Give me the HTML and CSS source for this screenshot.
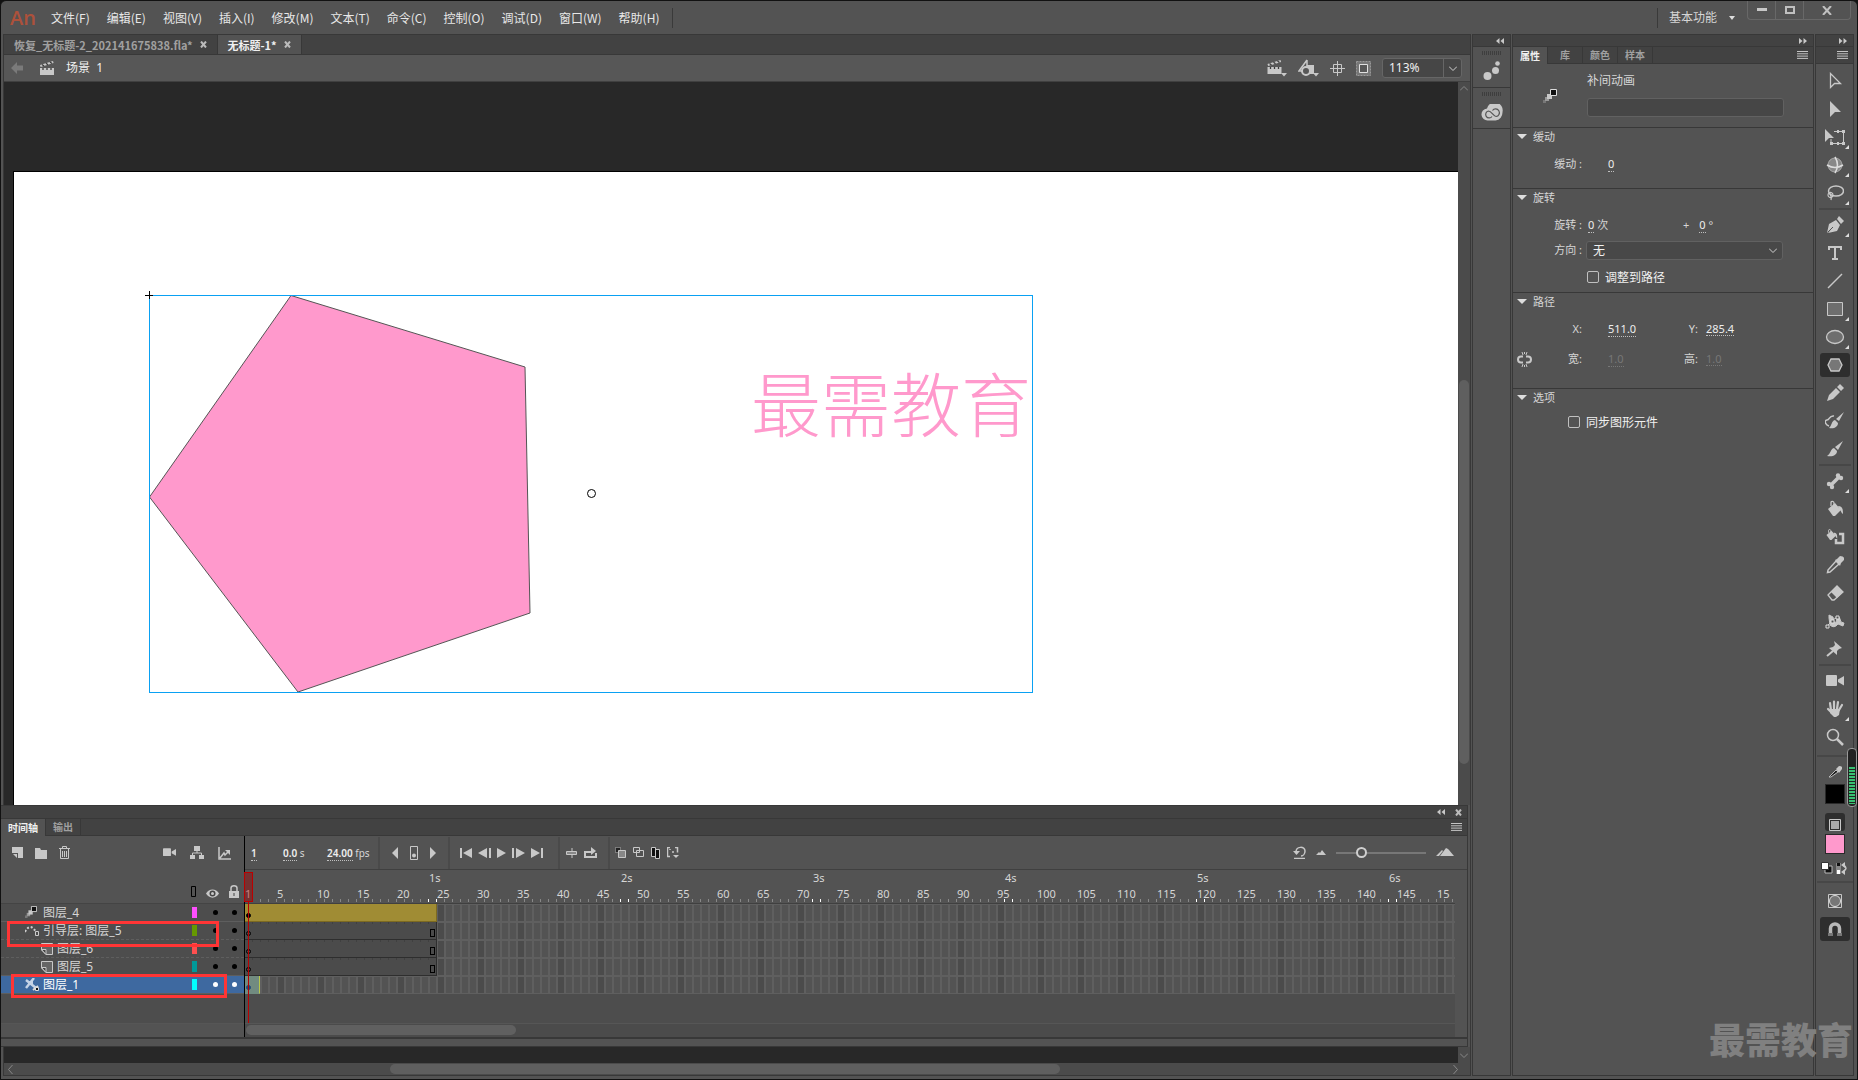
FILE: index.html
```html
<!DOCTYPE html>
<html lang="zh-CN">
<head>
	<meta charset="UTF-8">
	<meta name="viewport" content="width=device-width, initial-scale=1.0">
	<title>无标题-1*</title>
	<link rel="stylesheet" href="styles.css">
</head>
<body>
	<svg class="defs" aria-hidden="true">
		<symbol id="clapper" viewBox="0 0 16 16"><path d="M1 8h14v7H1z M1 5l13-4 .6 2L1.6 7z"/><path d="M3 4.5l2 1.6M7 3.2l2 1.6M11 2l2 1.5M4 8v2M8 8v2M12 8v2" stroke="#3c3c3c" stroke-width="1.3"/></symbol>
		<symbol id="menu" viewBox="0 0 11 8"><path d="M0 .5h11M0 2.8h11M0 5.1h11M0 7.4h11" stroke="#c4c4c4" fill="none"/></symbol>
		<symbol id="left2" viewBox="0 0 8 6"><path d="M3.5 0v6L0 3zM8 0v6L4.500 3z"/></symbol>
		<symbol id="right2" viewBox="0 0 8 6"><path d="M0 0v6l3.500-3zM4.500 0v6L8 3z"/></symbol>
		<symbol id="close" viewBox="0 0 7 7"><path d="M1 .5l5 6M6 .5l-5 6" stroke="#bbb" stroke-width="2"/></symbol>
		<symbol id="cam" viewBox="0 0 18 12"><rect width="11" height="11" rx="1"/><path d="M12 4.500L18 1v9.500L12 7z"/></symbol>
		<symbol id="tween" viewBox="0 0 14 14"><path d="M0 11h3v3H0z" fill="#777"/><path d="M2 8h4v4H2z" fill="#999"/><path d="M4 5h5v5H4z"/><path d="M7.500 .5h6v6h-6z" fill="#111" stroke="#ddd"/></symbol>
		<symbol id="page" viewBox="0 0 12 12"><path d="M.5 .5h11v11H5L.5 7z" fill="#666" stroke="#c8c8c8"/><path d="M.5 6.500H5v5z" fill="#444" stroke="#c8c8c8"/></symbol>
		<symbol id="bucket" viewBox="0 0 18 18"><path d="M2 9l7-6 6 7-6 6H7z"/><path d="M5 6V2.500C5 1 8 1 8 3v4" fill="none" stroke="#c8c8c8" stroke-width="1.300"/><path d="M12 6c4 0 5 2 5 8-2-1-2-4-4-5z"/></symbol>
	</svg>

	<div class="app">
		<header class="titlebar">
			<span class="logo">An</span>
			<nav class="menubar">
				<button>文件(F)</button><button>编辑(E)</button><button>视图(V)</button><button>插入(I)</button><button>修改(M)</button><button>文本(T)</button><button>命令(C)</button><button>控制(O)</button><button>调试(D)</button><button>窗口(W)</button><button>帮助(H)</button>
			</nav>
			<button class="workspace-btn">基本功能 <i class="caret"></i></button>
			<div class="win-btns">
				<button aria-label="最小化"><svg width="10" height="4"><path d="M0 0h10v3H0z"/></svg></button>
				<button aria-label="最大化"><svg width="10" height="8"><path d="M1 1h8v6H1z" fill="none" stroke="#c0c0c0" stroke-width="2"/></svg></button>
				<button aria-label="关闭"><svg width="10" height="9"><path d="M1 0l8 9M9 0L1 9" stroke="#c0c0c0" stroke-width="2"/></svg></button>
			</div>
		</header>

		<div class="main">
			<main class="workspace">
				<div class="doc-tabs">
					<div class="doc-tab"><span>恢复_无标题-2_202141675838.fla*</span><button aria-label="关闭"><svg width="7" height="7"><use href="#close"/></svg></button></div>
					<div class="doc-tab active"><span>无标题-1*</span><button aria-label="关闭"><svg width="7" height="7"><use href="#close"/></svg></button></div>
				</div>
				<div class="edit-bar">
					<button aria-label="返回"><svg width="12" height="12"><path d="M0 6l6-6v3.500h6v5H6V12z" fill="#7a7a7a"/></svg></button>
					<svg class="scene-icon" width="16" height="16"><use href="#clapper"/></svg>
					<span class="scene">场景 &nbsp;1</span>
					<div class="edit-tools">
						<button aria-label="编辑场景"><svg width="21" height="18"><use href="#clapper" width="17" height="16"/><path d="M15 14h6l-3 3.500z"/></svg></button>
						<button aria-label="编辑元件"><svg width="21" height="18"><path d="M9 1L1 12h5M9 1v5" fill="none" stroke="#c8c8c8" stroke-width="1.500"/><path d="M8 6h8v9h-5z"/><circle cx="8" cy="12" r="4" fill="#575757" stroke="#c8c8c8" stroke-width="2"/><path d="M15 14h6l-3 3.500z"/></svg></button>
						<button aria-label="舞台居中"><svg width="15" height="15"><path d="M7.500 0v15M0 7.500h15M3.500 3.500h8v8h-8z" fill="none" stroke="#c8c8c8"/></svg></button>
						<button aria-label="剪切舞台外内容"><svg width="15" height="15"><path d="M.5 .5h14v14H.5z" fill="#777" stroke="#999" stroke-dasharray="2 1"/><path d="M3.500 3.500h8v8h-8z" fill="#575757" stroke="#e0e0e0"/></svg></button>
						<div class="zoom"><input type="text" value="113%" aria-label="缩放"><button aria-label="缩放选项"><svg width="8" height="5"><path d="M0 .5l4 4 4-4" fill="none" stroke="#d0d0d0"/></svg></button></div>
					</div>
				</div>

				<div class="canvas-area">
					<div class="pasteboard">
						<div class="stage">
							<svg class="artwork">
								<path d="M277 123.500L511 195l5 246-232 79L135.500 325z" fill="#ff99cc" stroke="#555"/>
								<rect x="135.500" y="123.500" width="883" height="397" fill="none" stroke="#0aa1f3"/>
								<path d="M131 123.500h8M135.500 119v8" stroke="#000"/>
								<circle cx="577.500" cy="321.500" r="4" fill="#fff" stroke="#000"/>
								<text class="stage-text" x="737" y="260">最需教育</text>
							</svg>
						</div>
					</div>
					<div class="vscroll"><svg width="8" height="5"><path d="M0 4.500l4-4 4 4" fill="none" stroke="#888"/></svg><i class="vthumb"></i></div>
				</div>

				<section class="timeline">
					<div class="tl-head"><button aria-label="折叠"><svg width="8" height="6"><use href="#left2"/></svg></button><button aria-label="关闭"><svg width="7" height="7"><use href="#close"/></svg></button></div>
					<div class="tabs tl-tabs"><button class="active">时间轴</button><button>输出</button><svg class="menu-icon" width="11" height="8"><use href="#menu"/></svg></div>
					<div class="tl-body">
						<div class="layers">
							<div class="layer-tools">
								<button aria-label="新建图层"><svg width="12" height="12"><path d="M0 0h11v11H6V6H0z"/><path d="M1 7h4v4z"/></svg></button>
								<button aria-label="新建文件夹"><svg width="13" height="12"><path d="M0 1h5l1 2h6v9H0z"/></svg></button>
								<button aria-label="删除"><svg width="12" height="14"><path d="M0 2.500h11M3.500 2V.5h4V2M1.500 3v9.500h8V3M3.500 5v6M5.500 5v6M7.500 5v6" fill="none" stroke="#c8c8c8"/></svg></button>
								<div class="view-tools">
									<button aria-label="摄像头"><svg width="13" height="10"><use href="#cam" width="13" height="9"/></svg></button>
									<button aria-label="父级视图"><svg width="14" height="14"><path d="M4 0h6v5H4zM0 9h5v4H0zM9 9h5v4H9z"/><path d="M7 5v2M2.500 9V7h9v2" fill="none" stroke="#c8c8c8"/></svg></button>
									<button aria-label="图层深度"><svg width="13" height="13"><path d="M1 0v12h12M2 11l4-5 1 2 4-4" fill="none" stroke="#c8c8c8" stroke-width="1.500"/><path d="M7 3h5v5z"/></svg></button>
								</div>
							</div>
							<div class="layer-head">
								<svg width="5" height="12"><path d="M.5 .5h4v10h-4z" fill="none" stroke="#000"/></svg>
								<svg width="13" height="9"><path d="M0 4.500C3-1 10-1 13 4.500 10 10 3 10 0 4.500z"/><circle cx="6.500" cy="4.500" r="3" fill="#444"/><circle cx="6.500" cy="4.500" r="1.500"/></svg>
								<svg width="10" height="13"><path d="M0 6h10v7H0z"/><path d="M2 6V3c0-3 6-3 6 0v3" fill="none" stroke="#c8c8c8" stroke-width="1.500"/><path d="M4.500 8h1v3h-1z" fill="#444"/></svg>
							</div>
							<div class="layer"><svg width="14" height="14"><use href="#tween" width="12" height="12"/></svg><span>图层_4</span><i class="swatch magenta"></i><i class="dot"></i><i class="dot"></i></div>
							<div class="layer dashed"><svg width="14" height="14"><path d="M0 8q5-10 11 0" fill="none" stroke="#ccc" stroke-width="2" stroke-dasharray="2 2"/><path d="M10.500 7.500h3v4h-3z" fill="none" stroke="#ccc"/></svg><span>引导层: 图层_5</span><i class="swatch olive"></i><i class="dot"></i><i class="dot"></i></div>
							<div class="layer child dashed"><svg width="12" height="12"><use href="#page"/></svg><span>图层_6</span><i class="swatch red"></i><i class="dot"></i><i class="dot"></i></div>
							<div class="layer child"><svg width="12" height="12"><use href="#page"/></svg><span>图层_5</span><i class="swatch teal"></i><i class="dot"></i><i class="dot"></i></div>
							<div class="layer selected"><svg width="14" height="14"><path d="M1 2l10 8M9 0L1 10" stroke="#c5d3e6" stroke-width="2.500"/><path d="M3 3h5v4H3z" fill="#c5d3e6"/><path d="M8 12l5-4" stroke="#ddd" stroke-width="2"/><path d="M10.500 9.500h3v3h-3z" fill="#111" stroke="#ddd"/></svg><span>图层_1</span><i class="swatch cyan"></i><i class="dot"></i><i class="dot"></i></div>
							<div class="layer-rest"></div>
							<div class="annot annot-guide"></div>
							<div class="annot annot-mask"></div>
						</div>

						<div class="frames">
							<div class="play-tools">
								<div class="readout"><span><u>1</u></span><span><u>0.0</u> s</span><span><u>24.00</u> fps</span></div>
								<div class="group keys">
									<button aria-label="上一关键帧"><svg width="6" height="12"><path d="M6 0v12L0 6z"/></svg></button>
									<button aria-label="插入关键帧"><svg width="8" height="14"><path d="M.5 .5h7v13h-7z" fill="none" stroke="#c8c8c8"/><circle cx="4" cy="9.500" r="2"/></svg></button>
									<button aria-label="下一关键帧"><svg width="6" height="12"><path d="M0 0v12l6-6z"/></svg></button>
								</div>
								<div class="group play">
									<button aria-label="第一帧"><svg width="12" height="10"><path d="M0 0h2v10H0zM12 0v10L3 5z"/></svg></button>
									<button aria-label="后退一帧"><svg width="13" height="10"><path d="M9 0v10L0 5zM11 0h2v10h-2z"/></svg></button>
									<button aria-label="播放"><svg width="9" height="10"><path d="M0 0v10l9-5z"/></svg></button>
									<button aria-label="前进一帧"><svg width="13" height="10"><path d="M4 0v10l9-5zM0 0h2v10H0z"/></svg></button>
									<button aria-label="最后一帧"><svg width="12" height="10"><path d="M0 0v10l9-5zM10 0h2v10h-2z"/></svg></button>
								</div>
								<div class="group two">
									<button aria-label="帧居中"><svg width="12" height="10"><path d="M6 0v10M0 5h11" stroke="#c8c8c8"/><path d="M.5 3.500h10v3H.5z" fill="#888" stroke="#c8c8c8"/></svg></button>
									<button aria-label="循环"><svg width="13" height="12"><path d="M3 5H1v5h11V6M3 5h4" fill="none" stroke="#c8c8c8" stroke-width="2"/><path d="M7 0l5 4-5 4z"/></svg></button>
								</div>
								<div class="group onion">
									<button aria-label="绘图纸外观"><svg width="11" height="11"><path d="M.5 .5h5v5h-5z" fill="#222" stroke="#bbb" stroke-dasharray="1 1"/><path d="M3.500 3.500h7v7h-7z" fill="#888" stroke="#c8c8c8"/></svg></button>
									<button aria-label="绘图纸外观轮廓"><svg width="11" height="11"><path d="M.5 .5h6v5h-6zM3.500 3.500h7v6h-7z" fill="#535353" stroke="#c8c8c8"/></svg></button>
									<button aria-label="编辑多个帧"><svg width="9" height="12"><path d="M.5 .5h4v9h-4zM4.500 2.500h4v9h-4z" fill="#111" stroke="#c8c8c8"/></svg></button>
									<button aria-label="修改标记"><svg width="12" height="12"><path d="M3 .5H.5v9H3M8 .5h2.500v5M3 2v1M5 5h2" fill="none" stroke="#c8c8c8" stroke-width="1.500"/><path d="M6 8h6l-3 3z"/></svg></button>
								</div>
								<div class="tl-zoom">
									<button aria-label="重置缩放"><svg width="13" height="13"><path d="M3 6c0-6 9-6 9-1 0 3-2 5-4 5M1 12.500h11" fill="none" stroke="#c8c8c8" stroke-width="1.500"/><path d="M0 5h7L3.500 9z"/></svg></button>
									<svg width="10" height="6"><path d="M0 5l3-3 1 1 2-3 4 5z"/></svg>
									<input type="range" min="0" max="100" value="25" aria-label="时间轴缩放">
									<svg width="18" height="9"><path d="M0 8l6-6 1 1-4 5zM4 8l6-8 2 1 1 1 5 6z"/></svg>
								</div>
							</div>
							<div class="ruler">
								<div class="seconds"><span>1s</span><span>2s</span><span>3s</span><span>4s</span><span>5s</span><span>6s</span></div>
								<div class="numbers"><span>1</span><span>5</span><span>10</span><span>15</span><span>20</span><span>25</span><span>30</span><span>35</span><span>40</span><span>45</span><span>50</span><span>55</span><span>60</span><span>65</span><span>70</span><span>75</span><span>80</span><span>85</span><span>90</span><span>95</span><span>100</span><span>105</span><span>110</span><span>115</span><span>120</span><span>125</span><span>130</span><span>135</span><span>140</span><span>145</span><span>15</span></div>
							</div>
							<div class="frame-row"><div class="span tweened"><i class="key full"></i></div></div>
							<div class="frame-row"><div class="span"><i class="key"></i><i class="end"></i></div></div>
							<div class="frame-row"><div class="span"><i class="key"></i><i class="end"></i></div></div>
							<div class="frame-row"><div class="span"><i class="key"></i><i class="end"></i></div></div>
							<div class="frame-row"><div class="span short"><i class="key blue"></i></div></div>
							<div class="frame-rest"></div>
							<div class="frame-scroll"><i></i></div>
							<div class="playhead"></div>
						</div>
					</div>
					<div class="tl-foot"></div>
				</section>

				<div class="canvas-foot"><svg width="8" height="5"><path d="M0 .5l4 4 4-4" fill="none" stroke="#888"/></svg></div>
				<div class="hscroll">
					<svg width="5" height="9"><path d="M4.500 0l-4 4.500 4 4.500" fill="none" stroke="#888"/></svg>
					<div class="htrack"><i></i></div>
					<svg width="5" height="9"><path d="M.5 0l4 4.500-4 4.500" fill="none" stroke="#888"/></svg>
				</div>
			</main>

			<aside class="dock">
				<div class="col-head"><svg width="8" height="6"><use href="#left2"/></svg></div>
				<div class="dock-item"><i class="grip"></i><button aria-label="画笔库"><svg width="18" height="20"><circle cx="4.500" cy="15" r="4"/><circle cx="12.500" cy="9.500" r="3.500"/><circle cx="14.500" cy="2.500" r="2.300"/></svg></button></div>
				<div class="dock-item"><i class="grip"></i><button aria-label="CC 库"><svg width="22" height="17"><path d="M7 16.500a6 6 0 0 1-1-12A7.500 7.500 0 0 1 21.500 8a8 8 0 0 1-7 8.500z"/><path d="M11 12.500a3.500 3.500 0 1 1-3.500-5.500c3 0 5 5.500 7.500 5.500a3.800 3.800 0 1 0-3.500-6" fill="none" stroke="#555" stroke-width="1.200"/></svg></button></div>
			</aside>

			<aside class="props">
				<div class="col-head"><svg width="8" height="6"><use href="#right2"/></svg></div>
				<div class="tabs"><button class="active">属性</button><button>库</button><button>颜色</button><button>样本</button><svg class="menu-icon" width="11" height="8"><use href="#menu"/></svg></div>
				<div class="prop-top">
					<svg width="14" height="14"><use href="#tween"/></svg>
					<div><label for="inst">补间动画</label><input id="inst" type="text"></div>
				</div>
				<section class="prop ease">
					<h2>缓动</h2>
					<div class="row"><span class="lab">缓动 :</span><span class="in"><u>0</u></span></div>
				</section>
				<section class="prop rotate">
					<h2>旋转</h2>
					<div class="row"><span class="lab">旋转 :</span><span class="val"><u>0</u> 次</span><span class="plus"><span>+</span><span><u>0</u> °</span></span></div>
					<div class="row"><label class="lab" for="dir">方向 :</label><select id="dir"><option>无</option></select></div>
					<label class="check"><input type="checkbox">调整到路径</label>
				</section>
				<section class="prop path">
					<h2>路径</h2>
					<div class="row"><span class="lab">X:</span><span class="in"><u>511.0</u></span><span class="lab2">Y:</span><u>285.4</u></div>
					<div class="row dim"><span class="lab"><svg width="15" height="15"><path d="M6 4.500H4a3 3 0 0 0 0 6h2M9 4.500h2a3 3 0 0 1 0 6H9" fill="none" stroke="#c8c8c8" stroke-width="2"/><path d="M5 0l1 3M10 0L9 3M7.500 0v2M5 15l1-3M10 15l-1-3M7.500 15v-2" stroke="#c8c8c8"/></svg>宽:</span><span class="in"><u>1.0</u></span><span class="lab2">高:</span><u>1.0</u></div>
				</section>
				<section class="prop options">
					<h2>选项</h2>
					<label class="check"><input type="checkbox">同步图形元件</label>
				</section>
			</aside>

			<aside class="tools">
				<div class="col-head"><svg width="8" height="6"><use href="#right2"/></svg></div>
				<div class="tabs"><svg class="menu-icon" width="11" height="8"><use href="#menu"/></svg></div>
				<div class="tool-list">
					<button aria-label="选择工具"><svg width="18" height="18"><path d="M4.500 1.500v14l4-4h6z" fill="none" stroke="#c8c8c8" stroke-width="1.300"/></svg></button>
					<button aria-label="部分选取"><svg width="18" height="18"><path d="M4 1v16l5-5h6z"/></svg></button>
					<button class="more" aria-label="任意变形"><svg width="20" height="18"><path d="M0 1v13l4-4h5z"/><path d="M9 3.500h9.500v12H6V11" fill="none" stroke="#c8c8c8"/><path d="M17 2h3v3h-3zM17 14h3v3h-3zM5 14h3v3H5zM12 2h2v3h-2zM12 14h2v3h-2z"/></svg></button>
					<button class="more" aria-label="3D 旋转"><svg width="18" height="18"><circle cx="9" cy="9" r="7" fill="#888" stroke="#aaa"/><path d="M1 9q8 5 16 0M9 1q5 8 0 16" fill="none" stroke="#ddd" stroke-width="1.500"/></svg></button>
					<button class="more" aria-label="套索"><svg width="18" height="18"><ellipse cx="10" cy="7" rx="7.500" ry="5" fill="none" stroke="#c8c8c8" stroke-width="1.500"/><path d="M3 9a2.500 2.500 0 1 0 4 2 2.500 2.500 0 0 0-4-2q3 3 2 7" fill="none" stroke="#c8c8c8" stroke-width="1.200"/></svg></button>
					<hr>
					<button class="more" aria-label="钢笔"><svg width="18" height="18"><path d="M1 17l2-9 7-4 4 5-3 6-9 2 4-5z"/><path d="M11 3l2-3 5 5-3 3z"/><path d="M2 16l5-5" stroke="#535353"/></svg></button>
					<button aria-label="文本"><svg width="18" height="18"><path d="M2 2h14v4h-2V4h-4v10h2v2H6v-2h2V4H4v2H2z"/></svg></button>
					<button aria-label="线条"><svg width="18" height="18"><path d="M2 16L16 2" stroke="#c8c8c8" stroke-width="1.500"/></svg></button>
					<button class="more" aria-label="矩形"><svg width="18" height="18"><path d="M1.500 2.500h15v13h-15z" fill="#6e6e6e" stroke="#c8c8c8"/></svg></button>
					<button class="more" aria-label="椭圆"><svg width="20" height="18"><ellipse cx="10" cy="9" rx="8.500" ry="6.500" fill="#6e6e6e" stroke="#c8c8c8" stroke-width="1.300"/></svg></button>
					<button class="on" aria-label="多角星形"><svg width="18" height="18"><path d="M5 3h8l3 6-3 6H5L2 9z" fill="#777" stroke="#c8c8c8" stroke-width="1.300"/></svg></button>
					<button aria-label="铅笔"><svg width="18" height="18"><path d="M1 17l2-6 7-7 4 4-7 7zM11 3l3-3 4 4-3 3z"/></svg></button>
					<button aria-label="画笔"><svg width="20" height="18"><path d="M19 0l-5 9-3-2zM10 8l3 3c0 4-4 6-9 5 3-2 2-7 6-8z"/><path d="M9 4C4 3 5 8 2 8s-2 5 2 6" fill="none" stroke="#c8c8c8" stroke-width="1.500"/></svg></button>
					<button aria-label="刷子"><svg width="18" height="18"><path d="M17 1l-5 9-3-3zM8 8l3 3c0 4-4 6-10 5 4-2 3-7 7-8z"/></svg></button>
					<hr>
					<button class="more" aria-label="骨骼"><svg width="18" height="18"><path d="M4 14L14 4" stroke="#c8c8c8" stroke-width="3.500"/><circle cx="3" cy="12" r="2.200"/><circle cx="6" cy="15" r="2.200"/><circle cx="12" cy="3.500" r="2.200"/><circle cx="15" cy="6" r="2.200"/></svg></button>
					<button aria-label="颜料桶"><svg width="18" height="18"><use href="#bucket"/></svg></button>
					<button aria-label="墨水瓶"><svg width="20" height="18"><use href="#bucket" width="13" height="14"/><path d="M14 6h4v9h-7v-4" fill="none" stroke="#c8c8c8" stroke-width="2.500"/></svg></button>
					<button aria-label="滴管"><svg width="18" height="18"><path d="M10 5l3 3-9 8-2.500.5L2 14z" fill="none" stroke="#c8c8c8" stroke-width="1.500"/><path d="M9 4l2-1 3-3q5 0 4 4l-3 3-1 3z"/></svg></button>
					<button aria-label="橡皮擦"><svg width="18" height="18"><path d="M2 11l9-9 6 6-9 8H6z" fill="none" stroke="#c8c8c8" stroke-width="1.300"/><path d="M5 8l6-6 6 6-6 6z"/></svg></button>
					<button aria-label="宽度"><svg width="20" height="18"><path d="M2 14l6-6 4-3M4 3l4 2 1 5q2 2 3-3 1-5 3 0 0 4 4 4l-1 3-5-2q-4 5-8 1L4 6z" stroke="#c8c8c8"/><path d="M1 13h3v3H1zM6 8h3v3H6zM11 4h3v3h-3z" fill="#535353" stroke="#ddd"/></svg></button>
					<button aria-label="资源变形"><svg width="18" height="18"><path d="M8 1l8 7-3 1-2 2v4L3 8l4-1 2-2z"/><path d="M7 11l-6 5" stroke="#c8c8c8" stroke-width="2"/></svg></button>
					<hr>
					<button aria-label="摄像头"><svg width="18" height="12"><use href="#cam"/></svg></button>
					<button class="more" aria-label="手形"><svg width="18" height="18"><path d="M5 10L4 3M8 9V1.500M11 9l1-7M13 10l3-5M6 13l-4-4" stroke="#c8c8c8" stroke-width="2.200" stroke-linecap="round"/><path d="M4 9h10l-1 6-3 2H8l-4-4z"/></svg></button>
					<button aria-label="缩放"><svg width="18" height="18"><circle cx="7" cy="7" r="5.500" fill="none" stroke="#c8c8c8" stroke-width="1.500"/><path d="M11 11l6 6" stroke="#c8c8c8" stroke-width="2.500"/></svg></button>
					<hr class="wide">
					<div class="colors">
						<svg width="14" height="12"><path d="M1 11l7-7 2 2-7 5z" fill="#222" stroke="#bbb"/><path d="M8 3l3-3q4 0 3 3l-3 4z"/></svg>
						<button class="color black" aria-label="笔触颜色"></button>
						<button class="fill-mode" aria-label="填充"><svg width="12" height="12"><path d="M.5 .5h11v11H.5z" fill="none" stroke="#c8c8c8"/><path d="M2 2h8v8H2z" fill="#aaa"/></svg></button>
						<button class="color pink" aria-label="填充颜色"></button>
						<svg width="27" height="13"><path d="M4 4h7v7H4z" fill="#111" stroke="#bbb"/><path d="M.5 .5h7v7h-7z" fill="#fff" stroke="#333"/><path d="M15 1h5v11h-5z" fill="#888"/><path d="M16 1h3v3h-3z" fill="#111"/><path d="M16 8h3v4h-3z" fill="#fff"/><path d="M22 3q6 3 0 7" fill="none" stroke="#c8c8c8" stroke-width="1.500"/><path d="M20 3l4-3v6zM20 10l4-3v6z"/></svg>
					</div>
					<hr class="wide">
					<button aria-label="对象绘制"><svg width="14" height="14"><path d="M.5 .5h13v13H.5z" fill="none" stroke="#c8c8c8"/><circle cx="7" cy="7" r="5.500" fill="#777" stroke="#ddd"/></svg></button>
					<button class="on" aria-label="贴紧至对象"><svg width="14" height="14"><path d="M2.500 14V6.500a4.500 4.500 0 0 1 9 0V14" fill="none" stroke="#b8b8b8" stroke-width="3.500"/><path d="M0 11h5v3H0zM9 11h5v3H9z" fill="#777"/></svg></button>
				</div>
			</aside>
		</div>
		<div class="meter"><i></i></div>
		<div class="watermark">最需教育</div>
	</div>
</body>
</html>
```
FILE: styles.css
```css
*{box-sizing: border-box;}
body{
	margin: 0; background: #111; color: #d6d6d6;
	font: 12px/18px "Noto Sans", "Noto Sans CJK SC", sans-serif;
}
button{
	padding: 0; border: 0; background: none; color: inherit;
	font: inherit; display: flex; align-items: center; justify-content: center;
}
svg{display: block; fill: #c8c8c8; flex: none;}
i{display: block; flex: none;}
u{text-decoration: none; border-bottom: 1px dotted #c0c0c0; color: #eee;}
.defs{position: absolute; width: 0; height: 0;}
.app{
	position: relative; height: 100vh; min-height: 1000px;
	display: flex; flex-direction: column;
	background: #535353; border: 1px solid #111;
	border-radius: 6px 6px 0 0; overflow: hidden;
}

/* 标题栏 */
.titlebar{height: 33px; flex: none; display: flex; align-items: center; padding-left: 9px;}
.logo{width: 41px; color: #ad513b; font: 600 20px/30px "Open Sans", sans-serif;}
.menubar{display: flex; gap: 17px; height: 20px; padding-right: 13px; margin-right: auto; border-right: 1px solid #3a3a3a; color: #e8e8e8; font-family: "Noto Sans CJK SC", sans-serif;}
.workspace-btn{gap: 12px; height: 20px; padding-left: 11px; border-left: 1px solid #3a3a3a; margin-right: 12px;}
.caret{border: 3px solid transparent; border-top: 4px solid #ddd; border-bottom: 0;}
.win-btns{
	display: flex; align-self: flex-start; height: 19px; margin-right: 6px;
	border: 1px solid #686868; border-top: 0; border-radius: 0 0 4px 4px;
}
.win-btns button{width: 28px; border-right: 1px solid #686868;}
.win-btns button:last-child{width: 46px; border: 0;}

.main{flex: 1; min-height: 0; display: flex; gap: 1px; padding: 0 3px 3px 2px;}
.workspace{flex: 1; min-width: 0; display: flex; flex-direction: column; border: 1px solid #383838;}

/* 文档标签 */
.doc-tabs{height: 20px; flex: none; display: flex; background: #424242; border-bottom: 1px solid #383838;}
.doc-tab{display: flex; align-items: center; gap: 7px; padding: 0 10px; border-right: 1px solid #383838; color: #a0a0a0; font: bold 11px/18px "Noto Sans CJK SC", sans-serif;}
.doc-tab.active{background: #535353; color: #f0f0f0;}
.edit-bar{height: 27px; flex: none; display: flex; align-items: center; background: #575757; border-bottom: 1px solid #404040; padding: 0 8px 0 7px;}
.scene-icon{margin: 0 11px 0 16px;}
.scene{color: #f0f0f0;}
.edit-tools{margin-left: auto; display: flex; align-items: center; gap: 11px;}
.zoom{display: flex; width: 80px; height: 20px; background: #464646; border: 1px solid #666; border-radius: 3px;}
.zoom input{width: 61px; padding: 0 6px; border: 0; border-right: 1px solid #666; background: none; color: #f0f0f0; font: inherit;}
.zoom button{flex: 1;}

/* 舞台 */
.canvas-area{flex: 1; min-height: 0; display: flex;}
.pasteboard{flex: 1; position: relative; overflow: hidden; background: #282828;}
.stage{position: absolute; left: 9px; top: 89px; right: 0; bottom: 0; background: #fff; border: 1px solid #000; border-width: 1px 0 0 1px;}
.artwork{width: 100%; height: 100%;}
.stage-text{fill: #ff99cc; font: 300 70px "Noto Sans CJK SC", sans-serif;}
.vscroll{width: 12px; background: #4b4b4b; display: flex; flex-direction: column; align-items: center; padding-top: 4px;}
.vthumb{width: 10px; height: 384px; margin-top: 289px; border-radius: 5px; background: #5f5f5f;}

/* 时间轴 */
.timeline{flex: none; margin: 0 2px 0 -3px; background: #535353; border: 1px solid #383838; border-left: 0;}
.tl-head{height: 13px; display: flex; align-items: center; justify-content: flex-end; gap: 10px; padding-right: 5px; background: #424242; border-bottom: 1px solid #383838;}
.tabs{height: 17px; display: flex; background: #424242; border-bottom: 1px solid #383838;}
.tabs button{min-width: 35px; padding: 0 7px; border-right: 1px solid #383838; height: 16px; color: #a0a0a0; font: bold 10px/16px "Noto Sans CJK SC", sans-serif;}
.tabs .active{height: 17px; background: #535353; color: #f0f0f0;}
.tabs .menu-icon{margin: 4px 5px 0 auto;}
.tl-body{display: flex;}
.layers{position: relative; width: 243px; flex: none;}
.layer-tools{height: 34px; display: flex; align-items: center; gap: 11px; padding: 0 13px 0 11px;}
.view-tools{margin-left: auto; display: flex; align-items: center; gap: 14px;}
.layer-head{height: 34px; display: flex; align-items: flex-end; gap: 10px; padding: 0 5px 5px 190px; border-bottom: 1px solid #444;}
.layer{height: 18px; display: flex; align-items: center; background: #4d4d4d; border-bottom: 1px solid #5e5e5e; padding: 0 7px 0 24px; font-size: 12px;}
.layer span{flex: 1; padding-left: 4px; line-height: 17px;}
.layer.child{padding-left: 40px;}
.layer.dashed{border-bottom-style: dashed;}
.layer.selected{background: #3e69a0; color: #fff;}
.swatch{width: 5px; height: 11px; margin-right: 16px;}
.magenta{background: #ff4fff;}
.olive{background: #669900;}
.red{background: #ff4f4f;}
.teal{background: #009999;}
.cyan{background: #00ffff;}
.dot{width: 5px; height: 5px; border-radius: 50%; background: #000;}
.dot + .dot{margin-left: 14px;}
.selected .dot{background: #fff;}
.layer-rest{height: 30px; background: #4d4d4d; border-bottom: 1px solid #565656;}
.annot{position: absolute; border: 3px solid #ff3535;}
.annot-guide{left: 6px; top: 85px; width: 212px; height: 26px;}
.annot-mask{left: 10px; top: 138px; width: 216px; height: 24px;}

.frames{position: relative; flex: 1; min-width: 0; border-left: 1px solid #000; padding-right: 12px;}
.play-tools{height: 34px; display: flex; align-items: center; border-bottom: 1px solid #404040; margin-right: -12px; padding-right: 13px; font: 10px/14px "Noto Sans", sans-serif;}
.readout{display: grid; grid-template-columns: 32px 44px 50px; padding-left: 6px; width: 133px;}
.readout u{font-weight: 600;}
.group{display: flex; align-items: center; height: 32px; border-left: 2px solid #4a4a4a;}
.keys{width: 70px; padding-left: 12px; gap: 12px;}
.play{width: 110px; padding-left: 10px; gap: 6px;}
.two{width: 50px; padding-left: 6px; gap: 6px;}
.onion{padding-left: 5px; gap: 7px;}
.tl-zoom{display: flex; align-items: center; gap: 10px; margin-left: auto;}
.tl-zoom input{appearance: none; width: 90px; height: 11px; margin: 0; background: linear-gradient(#777, #777) center/100% 2px no-repeat;}
.tl-zoom input::-webkit-slider-thumb{appearance: none; width: 11px; height: 11px; border: 2px solid #d0d0d0; border-radius: 50%; background: #535353;}

/* 每帧 8px,每秒 24 帧 */
.ruler{
	height: 34px; overflow: hidden; border-bottom: 1px solid #404040; color: #d6d6d6;
	font: 11px/16px "Noto Sans", sans-serif;
	background:
		repeating-linear-gradient(to right, #fff 0 1px, transparent 1px 8px, #fff 8px 9px, transparent 9px 192px) 183px 29px/100% 3px no-repeat,
		repeating-linear-gradient(to right, transparent 0 7px, #888 7px 8px) 0 29px/100% 3px no-repeat;
}
.seconds{display: flex; padding-left: 184px; height: 16px;}
.seconds span{width: 192px; flex: none;}
.numbers{display: flex; height: 17px;}
.numbers span{width: 40px; flex: none;}
.numbers span:first-child{width: 32px;}
.numbers span:last-child{width: 16px;}
.frame-row{
	height: 18px; border: 1px solid #5f5f5f; border-width: 1px 0;
	background:
		repeating-linear-gradient(to right, transparent 0 33px, #4b4b4b 33px 39px, transparent 39px 40px),
		repeating-linear-gradient(to right, #5f5f5f 0 1px, #535353 1px 7px, #5f5f5f 7px 8px);
}
.span{
	position: relative; width: 192px; height: 18px; margin-top: -1px;
	border: 1px solid #2e2e2e; border-width: 0 1px 1px 0;
	background: repeating-linear-gradient(to right, transparent 0 7px, #404040 7px 8px) 0 0/100% 2px no-repeat #4b4b4b;
}
.span.tweened{background: #a08c34; border-color: #7d6a20;}
.span.short{width: 15px; background: #718b80; border-color: #b8c84a; border-bottom-color: #718b80;}
.key{position: absolute; left: 1px; bottom: 3px; width: 5px; height: 5px; border: 1px solid #000; border-radius: 50%;}
.key.full{background: #000;}
.key.blue{background: #1e4a78; border-color: #1e4a78;}
.end{position: absolute; right: 1px; bottom: 2px; width: 5px; height: 8px; border: 1px solid #000;}
.frame-rest{height: 30px; background: #4d4d4d; border-bottom: 1px solid #565656;}
.frame-scroll{height: 13px; padding: 1px; background: #4b4b4b;}
.frame-scroll i{width: 270px; height: 10px; border-radius: 5px; background: #606060;}
.playhead{position: absolute; left: -1px; top: 36px; width: 9px; height: 30px; border: 1px solid #b00; background: rgba(170, 0, 0, .4);}
.playhead::after{content: ""; position: absolute; left: 3px; top: 29px; width: 1px; height: 121px; background: #b00;}
.tl-foot{height: 9px; border-top: 2px solid #383838;}

.canvas-foot{height: 16px; flex: none; display: flex; align-items: center; justify-content: flex-end; background: linear-gradient(#4b4b4b, #4b4b4b) right/12px 100% no-repeat #282828; padding-right: 2px;}
.hscroll{height: 12px; flex: none; display: flex; align-items: center; padding: 0 12px 0 4px; background: #4b4b4b;}
.htrack{flex: 1; padding-left: 26%;}
.htrack i{width: 63%; height: 10px; border-radius: 5px; background: #5f5f5f;}

/* 右侧面板 */
.dock, .props, .tools{flex: none; border: 1px solid #383838;}
.dock{width: 39px;}
.props{width: 302px;}
.tools{width: 39px;}
.col-head{height: 12px; display: flex; align-items: center; justify-content: flex-end; padding-right: 6px; background: #424242; border-bottom: 1px solid #383838;}
.dock-item{height: 41px; display: flex; flex-direction: column; align-items: center; padding-top: 4px; border-bottom: 1px solid #383838;}
.dock-item button{flex: 1;}
.grip{width: 20px; height: 4px; background: repeating-linear-gradient(to right, #3e3e3e 0 1px, transparent 1px 2px);}
.prop-top{height: 64px; display: flex; gap: 30px; padding: 8px 0 0 30px; border-bottom: 1px solid #383838;}
.prop-top svg{margin-top: 17px;}
.prop-top label{display: block;}
.prop-top input{display: block; width: 197px; height: 19px; margin-top: 8px; background: #464646; border: 1px solid #616161; border-radius: 3px; color: #eee;}
.prop{border-bottom: 1px solid #383838; font-size: 11px;}
.prop h2{margin: 0; display: flex; align-items: center; gap: 6px; padding-left: 4px; font: 11px/16px "Noto Sans CJK SC", sans-serif;}
.prop h2::before{content: ""; border: 5px solid transparent; border-top-color: #ddd; border-bottom: 0;}
.prop u{line-height: 12px;}
.row{height: 18px; display: flex; align-items: center; margin-top: 11px;}
.lab{width: 69px; flex: none; text-align: right; display: flex; justify-content: flex-end; align-items: center;}
.lab svg{margin: 0 auto 0 4px;}
.in{width: 98px; padding-left: 26px;}
.val{width: 101px; padding-left: 6px;}
.plus{display: flex; gap: 10px;}
.lab2{width: 18px; margin-right: 8px; text-align: right;}
.dim u{color: #777; border-color: #777;}
.row select{
	appearance: none; width: 197px; height: 19px; margin-left: 4px; padding: 0 6px;
	border: 1px solid #616161; border-radius: 3px; color: #f0f0f0;
	font: 12px/16px "Noto Sans CJK SC", sans-serif;
	background: #484848 url("data:image/svg+xml,%3Csvg xmlns='http://www.w3.org/2000/svg' width='8' height='5'%3E%3Cpath d='M0 .5l4 4 4-4' fill='none' stroke='%23d0d0d0'/%3E%3C/svg%3E") right 5px center no-repeat;
}
.check{display: flex; align-items: center; gap: 6px; color: #f0f0f0; font: 12px/18px "Noto Sans CJK SC", sans-serif;}
.check input{appearance: none; width: 12px; height: 12px; margin: 0; border: 1px solid #c0c0c0; border-radius: 2px;}
.ease{padding-bottom: 15px;}
.rotate .row + .row{margin-top: 7px;}
.rotate .check{margin: 9px 0 6px 74px;}
.path .row + .row{margin-top: 12px; margin-bottom: 20px;}
.options{border: 0;}
.options .check{margin: 8px 0 0 55px;}

.tool-list{display: flex; flex-direction: column; align-items: center; gap: 4px; padding-top: 5px;}
.tool-list button{position: relative; width: 30px; height: 24px; border-radius: 3px; flex: none;}
.tool-list .on{background: #2e2e2e;}
.more::after{content: ""; position: absolute; right: 1px; bottom: 0; border: 2px solid transparent; border-right-color: #ddd; border-bottom-color: #ddd;}
.tool-list hr{width: 32px; height: 2px; margin: -1px 0; border: 0; background: #474747; flex: none;}
.tool-list .wide{width: 36px; margin: 2px 0;}
.colors{display: flex; flex-direction: column; align-items: center; gap: 3px; padding-top: 3px; height: 112px;}
.tool-list .color{width: 20px; height: 20px; border: 1px solid #2a2a2a; border-radius: 0; margin-top: 3px;}
.tool-list .fill-mode{width: 20px; height: 18px; margin-top: 6px; background: #2e2e2e;}
.tool-list .pink{margin-top: 0;}
.colors svg:last-child{margin-top: 5px;}
.black{background: #000;}
.pink{background: #ff99cc;}

/* 浮在界面上的音量条和水印 */
.meter{position: absolute; right: 0; top: 747px; width: 10px; height: 59px; padding: 18px 1px 2px; border: 1px solid #999; border-radius: 4px; background: #222;}
.meter i{height: 100%; background: repeating-linear-gradient(#38c172 0 2px, #222 2px 3px);}
.watermark{position: absolute; right: 4px; bottom: 17px; color: #808080; font: 900 36px/48px "Noto Sans CJK SC", sans-serif;}
```
